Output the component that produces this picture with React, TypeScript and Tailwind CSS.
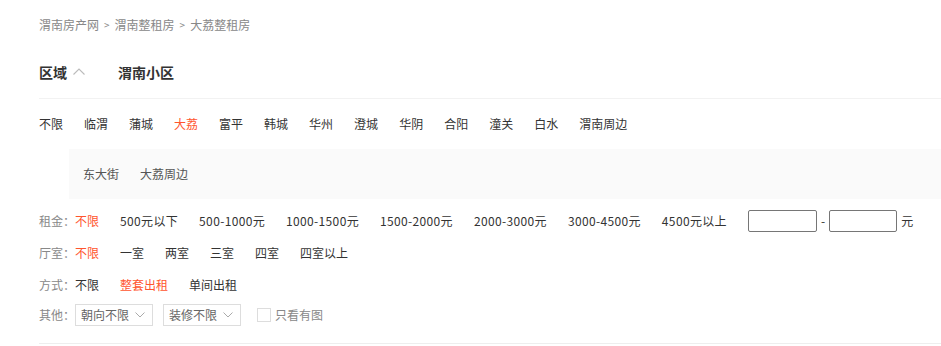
import React from "react";

const regions = ["不限", "临渭", "蒲城", "大荔", "富平", "韩城", "华州", "澄城", "华阴", "合阳", "潼关", "白水", "渭南周边"];
const rents = ["500元以下", "500-1000元", "1000-1500元", "1500-2000元", "2000-3000元", "3000-4500元", "4500元以上"];
const rooms = ["一室", "两室", "三室", "四室", "四室以上"];

function SelectBox({ label }: { label: string }) {
  return (
    <div className="flex items-center justify-between w-[78px] h-[22px] border border-[#dddddd] bg-white pl-[5px] pr-[7px] text-[#666666]">
      <span className="leading-none">{label}</span>
      <svg width="10" height="6" viewBox="0 0 10 6" fill="none">
        <path d="M0.5 0.5 L5 5 L9.5 0.5" stroke="#aaaaaa" strokeWidth="1" />
      </svg>
    </div>
  );
}

export default function App() {
  return (
    <div
      className="w-[941px] h-[346px] bg-white overflow-hidden pl-[39px] text-[12px] text-[#333333]"
      style={{ fontFamily: '"Noto Sans CJK SC", "Microsoft YaHei", sans-serif' }}
    >
      {/* breadcrumb */}
      <div className="h-[50px] flex items-center text-[#888888] leading-none">
        <span>渭南房产网</span>
        <span className="mx-[5px] text-[10px]">&gt;</span>
        <span>渭南整租房</span>
        <span className="mx-[5px] text-[10px]">&gt;</span>
        <span>大荔整租房</span>
      </div>

      {/* title tabs */}
      <div className="h-[49px] pb-[5px] flex items-center border-b border-[#f2f2f2] text-[14px] font-bold leading-none">
        <span>区域</span>
        <svg className="ml-[6px]" width="12" height="7" viewBox="0 0 12 7" fill="none">
          <path d="M0.5 6.5 L6 1 L11.5 6.5" stroke="#bbbbbb" strokeWidth="1.1" />
        </svg>
        <span className="ml-[33px]">渭南小区</span>
      </div>

      {/* region list */}
      <div className="h-[50px] flex items-center gap-[21px] leading-none">
        {regions.map((r) => (
          <span key={r} className={r === "大荔" ? "text-[#ff552e]" : ""}>
            {r}
          </span>
        ))}
      </div>

      {/* sub region box */}
      <div className="ml-[30px] h-[50px] bg-[#fafafa] flex items-center gap-[21px] pl-[14px] text-[#555555] leading-none">
        <span>东大街</span>
        <span>大荔周边</span>
      </div>

      {/* rent */}
      <div className="mt-[7px] h-[30px] flex items-center leading-none">
        <span className="text-[#888888] w-[36px]">租金：</span>
        <div className="flex items-center gap-[21px]">
          <span className="text-[#ff552e]">不限</span>
          {rents.map((r) => (
            <span key={r} className="tracking-[0.35px]">{r}</span>
          ))}
          <div className="flex items-center">
            <div className="w-[69px] h-[22px] border border-[#767676] rounded-[2px] bg-white" />
            <span className="mx-[4px]">-</span>
            <div className="w-[68px] h-[22px] border border-[#767676] rounded-[2px] bg-white" />
            <span className="ml-[4px]">元</span>
          </div>
        </div>
      </div>

      {/* rooms */}
      <div className="h-[33px] flex items-center leading-none">
        <span className="text-[#888888] w-[36px]">厅室：</span>
        <div className="flex items-center gap-[21px]">
          <span className="text-[#ff552e]">不限</span>
          {rooms.map((r) => (
            <span key={r}>{r}</span>
          ))}
        </div>
      </div>

      {/* method */}
      <div className="h-[31px] flex items-center leading-none">
        <span className="text-[#888888] w-[36px]">方式：</span>
        <div className="flex items-center gap-[21px]">
          <span>不限</span>
          <span className="text-[#ff552e]">整套出租</span>
          <span>单间出租</span>
        </div>
      </div>

      {/* other */}
      <div className="h-[30px] flex items-center leading-none">
        <span className="text-[#888888] w-[36px]">其他：</span>
        <div className="flex items-center">
          <SelectBox label="朝向不限" />
          <div className="ml-[10px]">
            <SelectBox label="装修不限" />
          </div>
          <div className="ml-[16px] flex items-center">
            <span className="w-[14px] h-[14px] border border-[#dddddd] bg-white" />
            <span className="ml-[4px] text-[#888888]">只看有图</span>
          </div>
        </div>
      </div>

      <div className="mt-[13px] h-px bg-[#eeeeee]" />
    </div>
  );
}
